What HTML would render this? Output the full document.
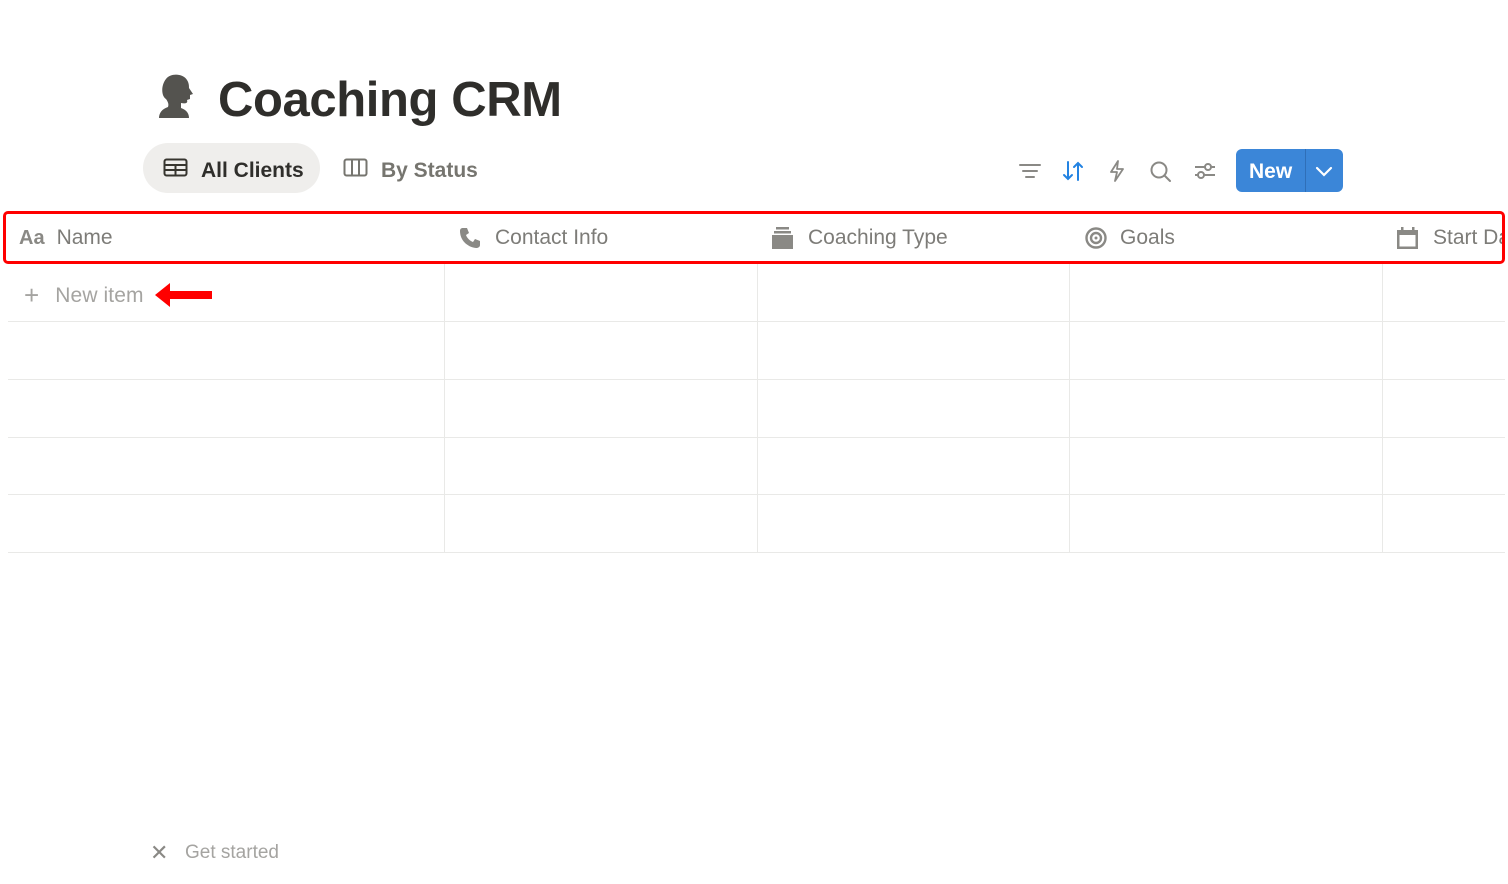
<!DOCTYPE html>
<html><head><meta charset="utf-8"><style>
*{margin:0;padding:0;box-sizing:border-box}
body{width:1508px;height:884px;background:#fff;position:relative;overflow:hidden;font-family:"Liberation Sans",sans-serif;color:#37352f}
.abs{position:absolute}
h1{position:absolute;left:218px;top:70px;font-size:49px;font-weight:bold;color:#2f2e2b;letter-spacing:-0.4px;line-height:60px}
.tab{position:absolute;height:50px;top:143px;border-radius:25px;font-size:21px;display:flex;align-items:center;padding-top:6px}
.hl{position:absolute;top:264px;width:1px;height:289px;background:#e9e9e7}
.rl{position:absolute;left:8px;width:1497px;height:1px;background:#e9e9e7}
.hd{position:absolute;top:222px;font-size:21px;color:#7d7c78;display:flex;align-items:center;height:32px;white-space:nowrap}
.ic{position:absolute;top:160px}
</style></head><body>
<svg class="abs" style="left:157px;top:74px" width="38" height="44" viewBox="0 0 38 44"><path fill="#54534f" d="M9 5C13-1 26-1 30 6c2 3 2 6 2 8l4 6-3 1 0 4-3 1c1 3-1 4-6 3v5c6 2 8 6 8 10H2c0-5 3-9 9-11 1-3 0-5-2-8C4 22 4 11 9 5z"/></svg>
<h1>Coaching CRM</h1>
<div class="tab" style="left:143px;width:177px;background:#efeeec;padding-left:20px;color:#2f2e2b;font-weight:bold">
<svg width="25" height="20" viewBox="0 0 25 20" style="margin-right:13px;margin-top:-6px"><rect x="1.5" y="1.5" width="22" height="16" rx="2" fill="none" stroke="#37352f" stroke-width="2"/><path d="M1.5 7h22M1.5 12h22M12.5 7v11" stroke="#37352f" stroke-width="2"/></svg>All Clients</div>
<div class="tab" style="left:343px;color:#76756f;font-weight:bold">
<svg width="25" height="20" viewBox="0 0 25 20" style="margin-right:13px;margin-top:-6px"><rect x="1.5" y="1.5" width="22" height="16" rx="2" fill="none" stroke="#76756f" stroke-width="2"/><path d="M9 1.5v16M16 1.5v16" stroke="#76756f" stroke-width="2"/></svg>By Status</div>
<svg class="ic" style="left:1019px" width="22" height="22" viewBox="0 0 22 22"><path d="M1 5h20M4 11h14M7 17h8" stroke="#8a8985" stroke-width="2" stroke-linecap="round"/></svg>
<svg class="ic" style="left:1062px" width="24" height="22" viewBox="0 0 24 22"><path d="M6 2v17M2 15l4 4 4-4M16 20V3M12 7l4-4 4 4" fill="none" stroke="#2383e2" stroke-width="2" stroke-linecap="round"/></svg>
<svg class="ic" style="left:1107px" width="20" height="22" viewBox="0 0 20 22"><path d="M11 1L4 12h6l-2 9 8-12h-6z" fill="none" stroke="#8a8985" stroke-width="1.8" stroke-linejoin="round"/></svg>
<svg class="ic" style="left:1149px" width="24" height="24" viewBox="0 0 24 24"><circle cx="10" cy="10" r="7.5" fill="none" stroke="#8a8985" stroke-width="2"/><path d="M15.5 15.5L21 21" stroke="#8a8985" stroke-width="2" stroke-linecap="round"/></svg>
<svg class="ic" style="left:1193px" width="24" height="22" viewBox="0 0 24 22"><path d="M2 7h20M2 15h20" stroke="#8a8985" stroke-width="2"/><circle cx="15" cy="7" r="3" fill="#fff" stroke="#8a8985" stroke-width="2"/><circle cx="8" cy="15" r="3" fill="#fff" stroke="#8a8985" stroke-width="2"/></svg>
<div class="abs" style="left:1236px;top:149px;width:107px;height:43px;background:#3b86d8;border-radius:6px;color:#fff;font-weight:bold;font-size:21px">
<span class="abs" style="left:13px;top:11px">New</span>
<div class="abs" style="left:69px;top:0;width:1px;height:43px;background:#2f6fb8"></div>
<svg class="abs" style="left:79px;top:15px" width="18" height="14" viewBox="0 0 18 14"><path d="M2 4l7 7 7-7" fill="none" stroke="#fff" stroke-width="2.2" stroke-linecap="round"/></svg>
</div>
<div class="abs" style="left:3px;top:211px;width:1502px;height:53px;border:3px solid #ff0000;border-radius:5px;overflow:hidden">
<div class="hd" style="left:13px;top:8px"><span style="font-weight:bold;font-size:20px;margin-right:12px;color:#8a8985">Aa</span>Name</div>
<div class="hd" style="left:452px;top:8px"><svg width="24" height="24" viewBox="0 0 24 24" style="margin-right:13px"><path fill="#8a8985" d="M5 2l4 0 2 5-3 2c1 3 4 6 7 7l2-3 5 2v4c0 2-2 3-4 3C9 21 2 14 2 5c0-2 1-3 3-3z"/></svg>Contact Info</div>
<div class="hd" style="left:766px;top:8px"><svg width="22" height="24" viewBox="0 0 22 24" style="margin-right:14px"><rect x="4" y="1" width="13" height="2.5" fill="#8a8985"/><rect x="2" y="5" width="17" height="2.5" fill="#8a8985"/><rect x="0" y="9" width="21" height="14" fill="#8a8985"/></svg>Coaching Type</div>
<div class="hd" style="left:1078px;top:8px"><svg width="24" height="24" viewBox="0 0 24 24" style="margin-right:12px"><circle cx="12" cy="12" r="9.5" fill="none" stroke="#8a8985" stroke-width="2.4"/><circle cx="12" cy="12" r="5" fill="none" stroke="#8a8985" stroke-width="2.4"/><circle cx="12" cy="12" r="1.5" fill="#8a8985"/></svg>Goals</div>
<div class="hd" style="left:1390px;top:8px"><svg width="24" height="24" viewBox="0 0 24 24" style="margin-right:13px"><rect x="1" y="4" width="21" height="19" fill="#8a8985"/><rect x="3.5" y="9" width="16" height="11.5" fill="#fff"/><rect x="5" y="1" width="2.5" height="5" fill="#8a8985"/><rect x="16" y="1" width="2.5" height="5" fill="#8a8985"/></svg>Start Date</div>
</div>
<div class="hl" style="left:444px"></div><div class="hl" style="left:757px"></div><div class="hl" style="left:1069px"></div><div class="hl" style="left:1382px"></div>
<div class="rl" style="top:321px"></div><div class="rl" style="top:379px"></div><div class="rl" style="top:437px"></div><div class="rl" style="top:494px"></div><div class="rl" style="top:552px"></div>
<div class="abs" style="left:24px;top:280px;font-size:21px;color:#a5a4a1;display:flex;align-items:center;letter-spacing:0.1px"><span style="font-size:26px;margin-right:16px;font-weight:300">+</span>New item</div>
<svg class="abs" style="left:154px;top:281px" width="60" height="28" viewBox="0 0 60 28"><path d="M1 14L16 2v8h42v8H16v8z" fill="#ff0000"/></svg>
<div class="abs" style="left:150px;top:840px;font-size:22px;color:#8a8985">✕</div>
<div class="abs" style="left:185px;top:842px;font-size:19px;color:#a5a4a1">Get started</div>
</body></html>
